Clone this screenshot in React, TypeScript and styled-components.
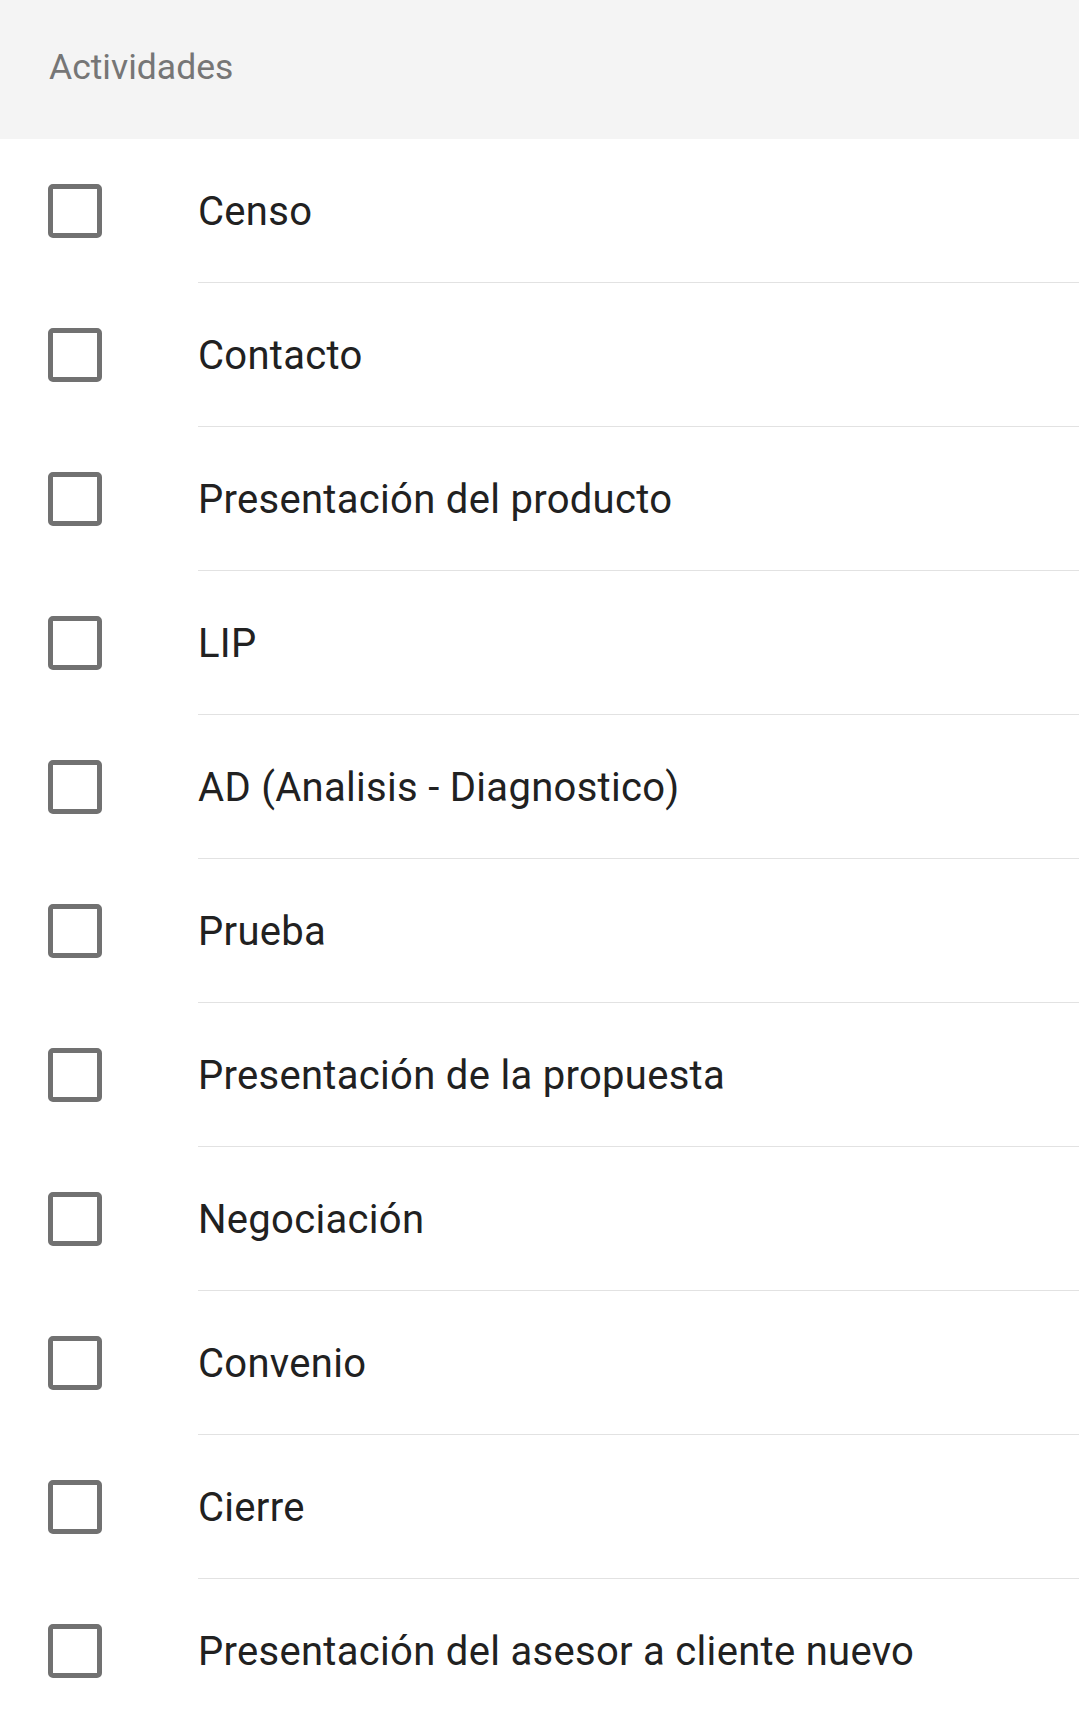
import styled, { createGlobalStyle } from "styled-components";

const GlobalStyle = createGlobalStyle`
  body {
    margin: 0;
    background: #ffffff;
    font-family: Roboto, "Noto Sans", "Liberation Sans", sans-serif;
  }
`;

const Page = styled.div`
  width: 100%;
  height: 1710px;
  overflow: hidden;
  background: #ffffff;
`;

const Header = styled.div`
  height: 139px;
  box-sizing: border-box;
  display: flex;
  align-items: center;
  padding: 0 0 6px 49px;
  background: #f4f4f4;
  color: #767676;
  font-size: 35.5px;
`;

const List = styled.ul`
  list-style: none;
  margin: 0;
  padding: 0;
`;

const Row = styled.li`
  display: flex;
  align-items: stretch;
  height: 144px;
`;

const BoxCell = styled.label`
  width: 198px;
  flex-shrink: 0;
  display: flex;
  align-items: center;
  padding-left: 48px;
  box-sizing: border-box;
`;

const Box = styled.span<{ checked?: boolean }>`
  width: 54px;
  height: 54px;
  box-sizing: border-box;
  border: 5.5px solid #717171;
  border-radius: 5px;
  background: ${(p) => (p.checked ? "#717171" : "transparent")};
`;

const Label = styled.div`
  flex: 1;
  display: flex;
  align-items: center;
  border-bottom: 1.5px solid #e2e2e2;
  color: #212121;
  font-size: 40px;
  letter-spacing: 0.3px;
  padding-top: 1px;
`;

const activities = [
  "Censo",
  "Contacto",
  "Presentación del producto",
  "LIP",
  "AD (Analisis - Diagnostico)",
  "Prueba",
  "Presentación de la propuesta",
  "Negociación",
  "Convenio",
  "Cierre",
  "Presentación del asesor a cliente nuevo",
];

function App() {
  return (
    <Page>
      <GlobalStyle />
      <Header>Actividades</Header>
      <List>
        {activities.map((name) => (
          <Row key={name}>
            <BoxCell>
              <Box />
            </BoxCell>
            <Label>{name}</Label>
          </Row>
        ))}
      </List>
    </Page>
  );
}

export default App;
